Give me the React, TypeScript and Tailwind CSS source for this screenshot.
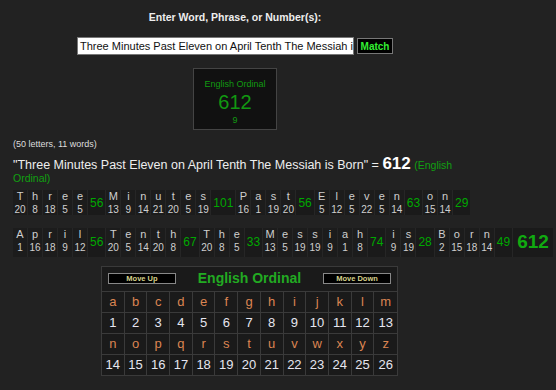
import React from "react";

type W = { w: string; v: number[]; s: number };

const row1: W[] = [
  { w: "Three", v: [20, 8, 18, 5, 5], s: 56 },
  { w: "Minutes", v: [13, 9, 14, 21, 20, 5, 19], s: 101 },
  { w: "Past", v: [16, 1, 19, 20], s: 56 },
  { w: "Eleven", v: [5, 12, 5, 22, 5, 14], s: 63 },
  { w: "on", v: [15, 14], s: 29 },
];
const row2: W[] = [
  { w: "April", v: [1, 16, 18, 9, 12], s: 56 },
  { w: "Tenth", v: [20, 5, 14, 20, 8], s: 67 },
  { w: "The", v: [20, 8, 5], s: 33 },
  { w: "Messiah", v: [13, 5, 19, 19, 9, 1, 8], s: 74 },
  { w: "is", v: [9, 19], s: 28 },
  { w: "Born", v: [2, 15, 18, 14], s: 49 },
];

function Word({ d }: { d: W }) {
  return (
    <>
      {d.w.split("").map((c, i) => (
        <div key={i} className="flex w-[14px] flex-col items-center bg-[#1c1c1c] text-[#cfcfcf]">
          <span className="h-[12.5px] text-[11px] leading-[13px]">{c}</span>
          <span className="h-[12.5px] text-[10px] leading-[13px]">{d.v[i]}</span>
        </div>
      ))}
      <div className="flex items-center bg-[#1a1a1a] px-[2px] text-[12px] text-[#00a800]">{d.s}</div>
    </>
  );
}

const letters1 = "abcdefghijklm".split("");
const letters2 = "nopqrstuvwxyz".split("");

export default function App() {
  return (
    <div className="relative h-[390px] w-[556px] overflow-hidden bg-[#222222] font-['Liberation_Sans',Arial,sans-serif] text-[#dddddd]">
      <div className="flex w-[470px] flex-col items-center">
        <div className="mt-[11px] text-[10.5px] font-bold leading-[13px] text-[#eeeeee]">
          Enter Word, Phrase, or Number(s):
        </div>
        <div className="mt-[13px] flex items-center gap-[3px]">
          <div className="h-[18px] w-[277px] overflow-hidden whitespace-nowrap border border-[#777] bg-white px-[2px] text-[11px] leading-[16px] text-[#111]">
            Three Minutes Past Eleven on April Tenth The Messiah is Born
          </div>
          <div className="flex h-[16px] w-[36px] items-center justify-center border border-[#777] bg-black text-[10px] font-bold text-[#33ee33]">
            Match
          </div>
        </div>
        <div className="mt-[13px] flex h-[62px] w-[84px] flex-col items-center border border-[#444] bg-[#111111] pt-[10px] text-[#119911]">
          <div className="text-[9px] leading-[11px]">English Ordinal</div>
          <div className="text-[20px] leading-[24px]">612</div>
          <div className="text-[9px] leading-[12px]">9</div>
        </div>
      </div>
      <div className="pl-[13px]">
        <div className="mt-[9px] text-[9px] leading-[11px] text-[#dddddd]">(50 letters, 11 words)</div>
        <div className="mt-[7px] w-[460px] text-[12.5px] leading-[13px] text-[#eeeeee]">
          "Three Minutes Past Eleven on April Tenth The Messiah is Born" ={" "}
          <span className="text-[17px] font-bold text-white">612</span>{" "}
          <span className="text-[10.5px] text-[#11a011]">(English Ordinal)</span>
        </div>
        <div className="mt-[5px] flex w-fit gap-px bg-[#262626]">
          {row1.map((d, i) => (
            <Word key={i} d={d} />
          ))}
        </div>
        <div className="mt-[13px] flex w-fit gap-px bg-[#262626]">
          {row2.map((d, i) => (
            <Word key={i} d={d} />
          ))}
          <div className="flex items-center bg-[#1a1a1a] px-[4px] text-[19px] font-bold text-[#11aa11]">612</div>
        </div>
      </div>
      <div className="ml-[101px] mt-[9px] w-[297px] border border-[#3a3a3a] bg-[#1a1a1a]">
        <div className="flex h-[25px] items-center justify-between border-b border-[#3a3a3a] px-[6px]">
          <div className="flex h-[11px] w-[68px] items-center justify-center border border-[#888] bg-black text-[7.5px] font-bold text-[#d6d08a]">
            Move Up
          </div>
          <div className="text-[14px] font-bold text-[#22aa22]">English Ordinal</div>
          <div className="flex h-[11px] w-[68px] items-center justify-center border border-[#888] bg-black text-[7.5px] font-bold text-[#d6d08a]">
            Move Down
          </div>
        </div>
        {[letters1, letters2].map((ls, r) => (
          <div key={r}>
            <div className="grid grid-cols-13 border-b border-[#3a3a3a]">
              {ls.map((l, i) => (
                <div key={i} className="flex h-[20px] items-center justify-center border-r border-[#3a3a3a] text-[13px] text-[#dc8552] last:border-r-0">
                  {l}
                </div>
              ))}
            </div>
            <div className={"grid grid-cols-13 border-[#3a3a3a] " + (r === 0 ? "border-b" : "")}>
              {ls.map((l, i) => (
                <div key={i} className="flex h-[20px] items-center justify-center border-r border-[#3a3a3a] text-[13px] text-[#e6e6f0] last:border-r-0">
                  {r * 13 + i + 1}
                </div>
              ))}
            </div>
          </div>
        ))}
      </div>
    </div>
  );
}
